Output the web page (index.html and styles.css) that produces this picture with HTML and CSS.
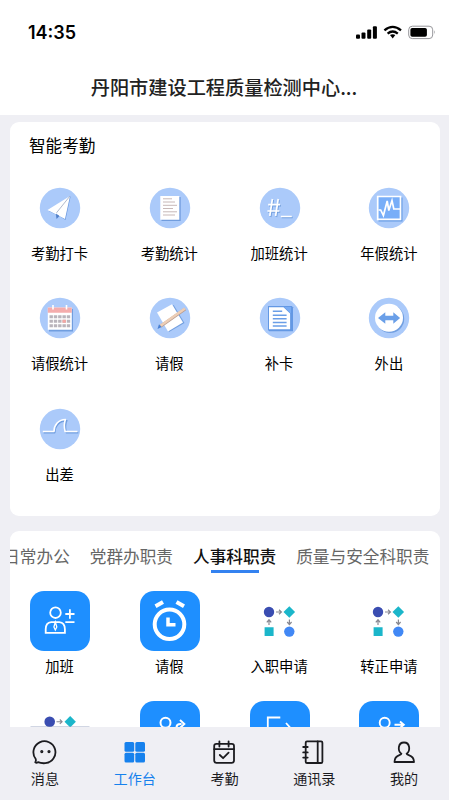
FILE: index.html
```html
<!DOCTYPE html>
<html lang="zh-CN">
<head>
<meta charset="utf-8">
<meta name="viewport" content="width=device-width, initial-scale=1">
<title>工作台</title>
<link rel="stylesheet" href="styles.css">
</head>
<body>
<svg class="defs" aria-hidden="true">
  <symbol id="flow" viewBox="-5 0 60 60">
    <circle cx="14" cy="21" r="5.2" fill="#3a4db1"/>
    <path d="M34.300 15.200 40.100 21 34.300 26.800 28.500 21z" fill="#1bb6ca"/>
    <path d="M9.600 36.200h9v8.800h-9z" fill="#1bb6ca"/>
    <circle cx="34.300" cy="40.600" r="5.200" fill="#4188f5"/>
    <path d="M21 21h5M24 18.800l2.400 2.200-2.400 2.200M14 34v-5M11.800 31.400l2.200-2.600 2.200 2.600M34.400 28.500v4.600M32.200 31l2.200 2.500 2.200-2.500" fill="none" stroke="#888891" stroke-width="1.200"/>
  </symbol>
</svg>
<div class="app">
  <header class="top">
    <div class="status">
      <span class="time">14:35</span>
      <svg class="signals" width="80" height="16" viewBox="0 0 80 16">
        <g fill="#000">
          <rect x="0" y="9.500" width="4" height="4.200" rx="1"/>
          <rect x="5.500" y="7.500" width="4" height="6.200" rx="1"/>
          <rect x="11.200" y="4.500" width="4" height="9.200" rx="1"/>
          <rect x="16.900" y="1.300" width="4" height="12.400" rx="1"/>
          <path d="M34 10q2.600-1.700 5.300 0L36.700 13.400z"/>
        </g>
        <path d="M28.400 5.300Q36.700-1.600 45 5.300M31.600 8.700q5.100-4.300 10.200 0" fill="none" stroke="#000" stroke-width="2.300"/>
        <rect x="52.700" y="1.200" width="24" height="12.400" rx="3.600" fill="#fff" stroke="#96969a"/>
        <rect x="54.400" y="3" width="16.500" height="8.800" rx="1.800" fill="#000"/>
        <path d="M78.300 5.200q1.600 2 0 4z" fill="#8d8d91"/>
      </svg>
    </div>
    <h1 class="title">丹阳市建设工程质量检测中心...</h1>
  </header>

  <main class="content">
    <section class="card card-attendance">
      <h2 class="card-title">智能考勤</h2>
      <div class="grid">
        <div class="item">
          <svg class="icon" viewBox="0 0 60 60"><circle class="disc" cx="30" cy="30" r="20.200"/><path d="M18.800 33 40.600 18.500 35.500 42 29.500 38.300 26.500 41 25.800 36.400z" fill="#6997dd"/><path d="M17.500 32 40 18 35 41z" fill="#fff"/><path d="M40 18 26.500 34.800" fill="none" stroke="#8d9ab6" stroke-width=".7"/><path d="m26 35.500.8 5 2.400-2.800z" fill="#527fc7"/></svg>
          <span class="label">考勤打卡</span>
        </div>
        <div class="item">
          <svg class="icon" viewBox="0 0 60 60"><circle class="disc" cx="30" cy="30" r="20.200"/><path d="M21.500 19h19.200v24H21.500z" fill="#719dde"/><path d="M20.300 18h19v23.800h-19z" fill="#fff"/><path d="M23 20.800h9M23 24h12M23 27.300h14M23 30.500h10M23 33.800h14M23 37h12" stroke="#c7b8b8" stroke-width="1"/></svg>
          <span class="label">考勤统计</span>
        </div>
        <div class="item">
          <svg class="icon" viewBox="0 0 60 60"><circle class="disc" cx="30" cy="30" r="20.200"/><g fill="none" stroke-width="1.700"><path d="m23.200 22-2.600 17M29 22l-2.600 17M19 27.600h12M18.200 34h12M31.600 39.500h11" stroke="#719ede"/><path d="m22.400 21-2.600 17M28.200 21l-2.600 17M18.200 26.600h12M17.400 33h12M30.800 38.500h11" stroke="#fff"/></g></svg>
          <span class="label">加班统计</span>
        </div>
        <div class="item">
          <svg class="icon" viewBox="0 0 60 60"><circle class="disc" cx="30" cy="30" r="20.200"/><path d="M19.500 19.500h24v24h-24z" fill="#659ae4"/><path d="M18.700 18.500h22.800v22.800H18.700z" fill="#78aef8" stroke="#fff" stroke-width="1.700"/><path d="M19.500 32h2.200l2.700 5.500L28.200 23l1.600 9.500L33 22.500l1.800 8.500h6.500" fill="none" stroke="#fff" stroke-width="1.700"/></svg>
          <span class="label">年假统计</span>
        </div>
        <div class="item">
          <svg class="icon" viewBox="0 0 60 60"><circle class="disc" cx="30" cy="30" r="20.200"/><path d="M19 21h24v22.500H19z" fill="#719edf"/><path d="M17.800 19.500h24v22.200h-24z" fill="#fff"/><path d="M17.800 19.500h24v5.300h-24z" fill="#f4acac"/><path d="M23 17v4.500M36.500 17v4.500" stroke="#fff" stroke-width="1.600"/><path d="M19.500 28.700h20.700M19.500 33.200h20.700M19.500 37.700h20.700" stroke="#b9b4bb" stroke-width="3" stroke-dasharray="3.400 .92"/><path d="M32.500 31.700h3.400v3h-3.400z" fill="#f3a6a3"/></svg>
          <span class="label">请假统计</span>
        </div>
        <div class="item">
          <svg class="icon" viewBox="0 0 60 60"><circle class="disc" cx="30" cy="30" r="20.200"/><path d="m18 25.500 15.700-8.500 10.800 18-15.500 9z" fill="#729fdf"/><path d="M17 24.500 32 16.200 43 34.500 28 43.500z" fill="#fff"/><path d="M20.500 38.300 45.200 21" stroke="#b99c90" stroke-width="3"/><path d="M20.500 37.800 45 20.400" stroke="#edceb6" stroke-width="2.500"/><path d="m17.500 41 1.500-4.700 2.600 2.700z" fill="#4780d4"/></svg>
          <span class="label">请假</span>
        </div>
        <div class="item">
          <svg class="icon" viewBox="0 0 60 60"><circle class="disc" cx="30" cy="30" r="20.200"/><path d="M18 18h23.800l1.200 1.200v24H19.200L18 42z" fill="#6398e4"/><path d="M19 19.200h14.500l6.600 6.300v15.800H19z" fill="#fff"/><path d="m34 19 7 6.500V19z" fill="#78abf3"/><path d="M22.800 23.300h9.400M22.800 27.200h13.800M22.800 30.800h13.800M22.800 34.500h13.800M22.800 38h13.800" stroke="#6a9ee7" stroke-width="1.400"/></svg>
          <span class="label">补卡</span>
        </div>
        <div class="item">
          <svg class="icon" viewBox="0 0 60 60"><circle class="disc" cx="30" cy="30" r="20.200"/><circle cx="31.200" cy="31" r="14" fill="#719fe1"/><circle cx="30" cy="29.800" r="14" fill="#fff"/><path d="m19 30 7.300-5.700v3.400h8v-3.400l6.800 5.700-6.800 5.700v-3.400h-8v3.400z" fill="#6a9fe8"/></svg>
          <span class="label">外出</span>
        </div>
        <div class="item">
          <svg class="icon" viewBox="0 0 60 60"><circle class="disc" cx="30" cy="30" r="20.200"/><g fill="none" stroke-width="1.600" stroke-linejoin="round"><path d="M13.600 33.600h11.200c0-6.500 4.500-12 12-12-2 3.800-1.700 7.500-.5 12h12" stroke="#719edf"/><path d="M12.800 32.500H24c0-6.500 4.500-12 11.500-12-1.700 3.800-1.500 7.500-.4 12h12.400" stroke="#fff"/></g></svg>
          <span class="label">出差</span>
        </div>
      </div>
    </section>

    <section class="card card-duties">
      <nav class="tabs">
        <span class="tab">日常办公</span>
        <span class="tab">党群办职责</span>
        <span class="tab tab-active">人事科职责</span>
        <span class="tab">质量与安全科职责</span>
      </nav>
      <div class="grid">
        <div class="item">
          <svg class="icon tile" viewBox="0 0 60 60"><g fill="none" stroke="#fff" stroke-width="1.800"><circle cx="25.500" cy="21.700" r="5.300"/><path d="M15.700 41.800v-3.500q0-6.800 5.500-7.200h8q5.700.4 5.700 7.200v3.500zM35.300 23h9.200M39.900 18.300v9.400M35.300 31.100h9.200"/><path d="m25.300 31-1.400 5 1.400 3 1.500-3z" stroke-width="1.300"/></g></svg>
          <span class="label">加班</span>
        </div>
        <div class="item">
          <svg class="icon tile" viewBox="0 0 60 60"><g fill="none" stroke="#fff"><circle cx="29.500" cy="33.300" r="14.800" stroke-width="4"/><path d="M28 26.500v7.300h7.500" stroke-width="3.500"/><path d="m15.500 15.300 7.500-4.300M36.500 11l7.500 4.300" stroke-width="4"/></g></svg>
          <span class="label">请假</span>
        </div>
        <div class="item">
          <svg class="icon"><use href="#flow"/></svg>
          <span class="label">入职申请</span>
        </div>
        <div class="item">
          <svg class="icon"><use href="#flow"/></svg>
          <span class="label">转正申请</span>
        </div>
        <div class="item">
          <svg class="icon" viewBox="0 0 60 60"><circle cx="19.700" cy="20.700" r="5.300" fill="#3a4db1"/><path d="m40.200 15 5.700 5.700-5.700 5.700-5.700-5.700z" fill="#1bb6ca"/><path d="M26.500 20.700h5.300M29.800 18.500l2.300 2.200-2.300 2.200" fill="none" stroke="#888891" stroke-width="1.100"/><path d="M.5 26.100h59" stroke="#8e9bbb"/></svg>
        </div>
        <div class="item">
          <svg class="icon tile" viewBox="0 0 60 60"><g fill="none" stroke="#fff" stroke-width="2"><circle cx="25.500" cy="21.700" r="5"/><path d="M36.500 27.500v-1q0-3.500 4-3.500h1M40 19l4.300 4-4.300 4"/></g></svg>
        </div>
        <div class="item">
          <svg class="icon tile" viewBox="0 0 60 60"><path d="M17.800 32V16.500h12.500M36 22l4.500 5" fill="none" stroke="#fff" stroke-width="1.800"/></svg>
        </div>
        <div class="item">
          <svg class="icon tile" viewBox="0 0 60 60"><g fill="none" stroke="#fff" stroke-width="1.900"><circle cx="25.700" cy="21.700" r="5"/><path d="M35.500 23.700h9M41 20.500l3.800 3.200-3.800 3.300"/></g></svg>
        </div>
      </div>
    </section>
  </main>

  <nav class="bottom">
    <a class="nav-item">
      <svg class="nav-icon" viewBox="0 0 26 26"><path d="M6 23.200q-1.500 1.100-2.700.2c-.3-.3 1.300-1 .3-3.600A11 11 0 1 1 13.300 24.200Q9 24.500 6 23.200z"/><circle cx="9.800" cy="12.600" r=".7"/><circle cx="17" cy="12.600" r=".7"/></svg>
      <span>消息</span>
    </a>
    <a class="nav-item nav-active">
      <svg class="nav-icon solid" viewBox="0 0 26 26"><rect x="2.500" y="3" width="9.700" height="9.700" rx="1.500"/><rect x="13.300" y="3" width="9.700" height="9.700" rx="1.500"/><rect x="2.500" y="13.800" width="9.700" height="9.700" rx="1.500"/><rect x="13.300" y="13.800" width="9.700" height="9.700" rx="1.500"/></svg>
      <span>工作台</span>
    </a>
    <a class="nav-item">
      <svg class="nav-icon" viewBox="0 0 26 26"><rect x="3.200" y="4.800" width="19.800" height="19" rx="2.200"/><path d="M3.200 10.200H23M8.400 2.300v5.200M17.600 2.300v5.200M8.800 16l3.300 3.200 5.500-5.500"/></svg>
      <span>考勤</span>
    </a>
    <a class="nav-item">
      <svg class="nav-icon" viewBox="0 0 26 26"><rect x="4.700" y="2.400" width="16.700" height="21.600" rx="1.300"/><path d="M16.700 2.500v21.400M2.200 8h4.500M2.200 13.400h4.500M2.200 18.600h4.500"/></svg>
      <span>通讯录</span>
    </a>
    <a class="nav-item">
      <svg class="nav-icon" viewBox="0 0 26 26"><path d="M10.400 14.700C6.500 12 6.700 3.500 13 3.500s6.500 8.500 2.600 11.200c.3 2.300 7.400.3 7.400 8.300H3.500c0-8 6.600-6 6.900-8.300z"/></svg>
      <span>我的</span>
    </a>
  </nav>
</div>
</body>
</html>
```

FILE: styles.css
```css
* {
  box-sizing: border-box;
}

body {
  margin: 0;
  background: #fff;
  color: #111;
  font-family: "Noto Sans CJK SC", sans-serif;
  overflow: hidden;
}

.defs {
  display: none;
}

.app {
  display: flex;
  flex-direction: column;
  width: 449px;
  height: 800px;
  background: #efeff4;
}

.top {
  flex: none;
  height: 115px;
  background: #fff;
}

.status {
  display: flex;
  align-items: center;
  justify-content: space-between;
  height: 66px;
  padding: 0 12px 0 28px;
}

.time {
  font: 600 18px/24px Inter, sans-serif;
  color: #000;
}

.signals {
  margin-right: 1px;
}

.title {
  margin: 0;
  font-size: 19.2px;
  font-weight: 500;
  line-height: 42px;
  text-align: center;
  text-indent: -1px;
  color: #222;
}

.content {
  display: flex;
  flex: 1;
  flex-direction: column;
  gap: 15px;
  min-height: 0;
  padding: 7px 9.5px 0;
  overflow: hidden;
}

.card {
  flex: none;
  border-radius: 9px;
  background: #fff;
  overflow: hidden;
}

.card-attendance {
  height: 394px;
}

.card-duties {
  height: 260px;
}

.card-title {
  height: 56px;
  margin: 0;
  padding-left: 19.5px;
  font-size: 16.6px;
  font-weight: 400;
  line-height: 47px;
  color: #000;
}

.grid {
  display: grid;
  grid-template-columns: repeat(4, 60px);
  grid-auto-rows: 90px;
  gap: 20.3px 49.8px;
  padding-left: 20.5px;
}

.item {
  display: flex;
  flex-direction: column;
  align-items: center;
}

.icon {
  flex: none;
  width: 60px;
  height: 60px;
}

.disc {
  fill: #abcafa;
}

.tile {
  border-radius: 14px;
  background: #1e8fff;
}

.label {
  margin-left: -1px;
  font-size: 14.3px;
  line-height: 29px;
  white-space: nowrap;
  color: #000;
}

.tabs {
  display: flex;
  gap: 20px;
  height: 59.5px;
  margin-left: -6.3px;
  font-size: 16.65px;
  line-height: 50px;
  white-space: nowrap;
  color: #666;
}

.tab-active {
  position: relative;
  font-weight: 500;
  color: #111;
}

.tab-active::after {
  content: "";
  position: absolute;
  top: 39px;
  left: 18px;
  width: 48px;
  height: 2.5px;
  background: #3482f0;
}

.bottom {
  display: grid;
  flex: none;
  grid-template-columns: repeat(5, 1fr);
  height: 73px;
  padding-top: 12px;
}

.nav-item {
  display: flex;
  flex-direction: column;
  align-items: center;
  font-size: 14.1px;
  line-height: 26px;
  color: #1b1b1f;
}

.nav-icon {
  width: 26px;
  height: 26px;
  fill: none;
  stroke: currentColor;
  stroke-width: 1.8;
  stroke-linecap: round;
  stroke-linejoin: round;
}

.solid {
  fill: currentColor;
  stroke: none;
}

.nav-active {
  color: #1681ed;
}
```
